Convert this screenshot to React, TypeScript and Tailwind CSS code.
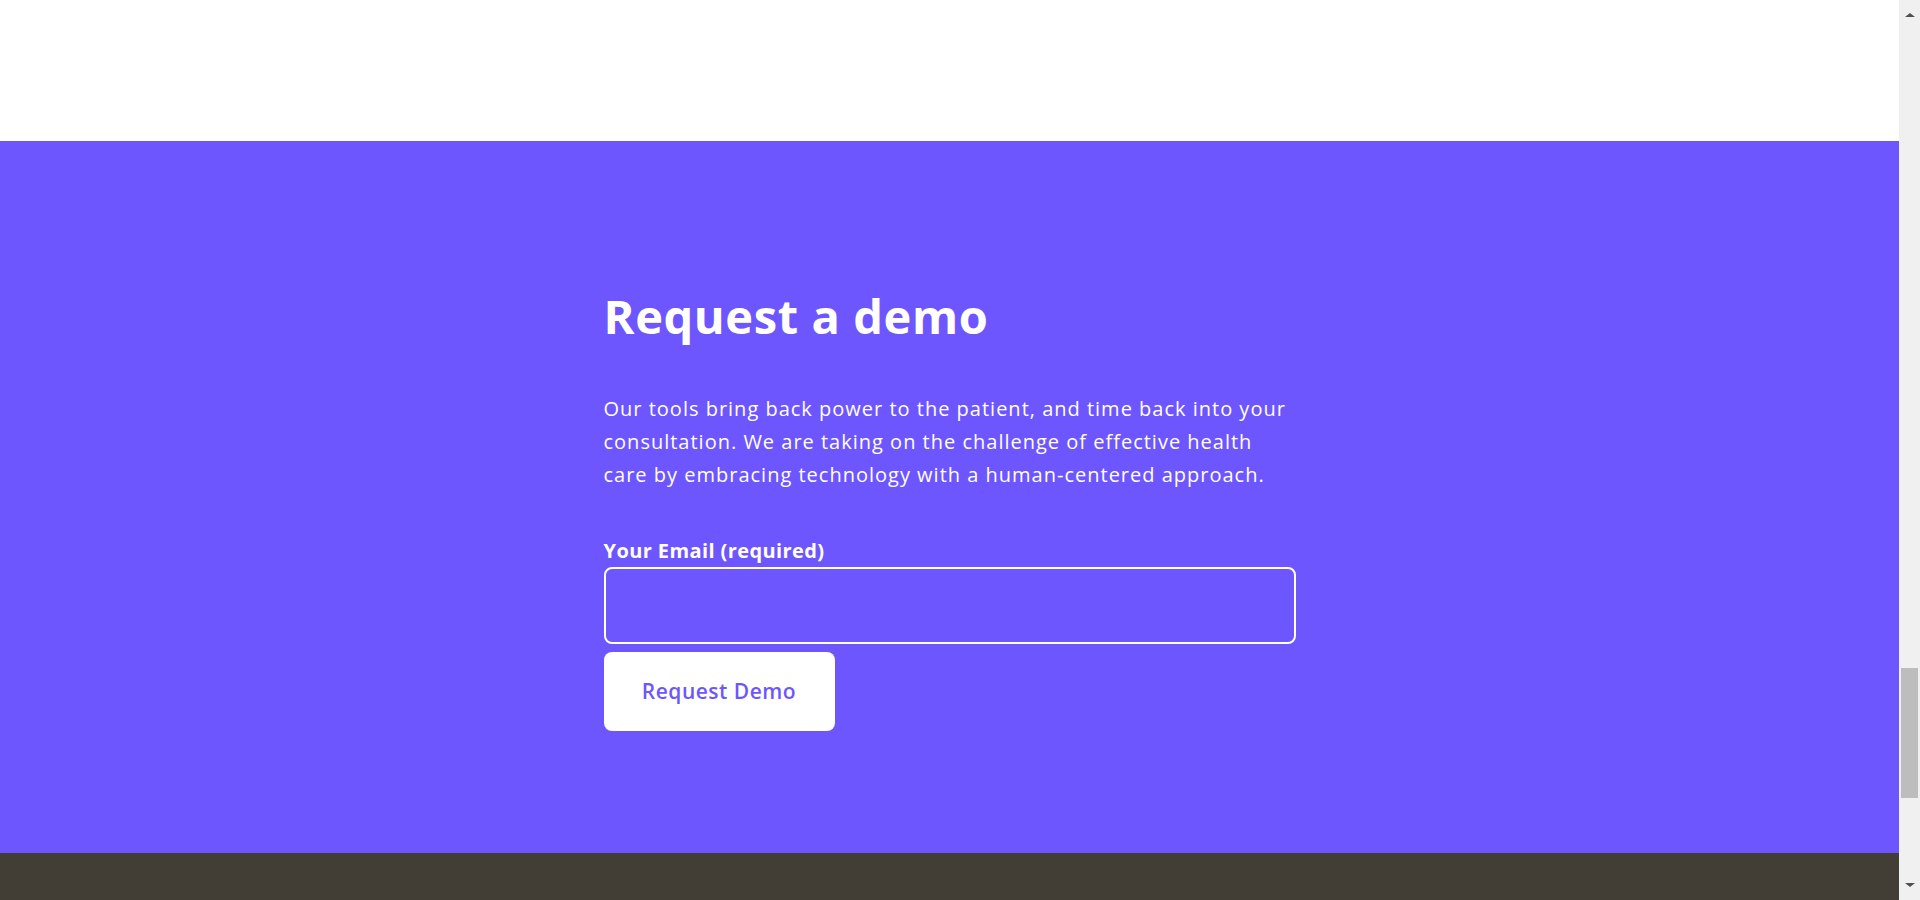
import { useState } from 'react';

export default function App() {
    const [email, setEmail] = useState('');

    return (
        <div className='flex h-[900px] w-full overflow-hidden bg-white' style={{ fontFamily: '"Open Sans", Lato, sans-serif' }}>

            {/* page */}
            <div className='flex flex-1 flex-col'>
                <div className='h-[141px] bg-white' />

                {/* request a demo */}
                <section className='flex h-[712px] justify-center bg-[#6e56ff] pt-[147px]'>
                    <div className='w-[692px] text-white'>
                        <h2 className='text-[47px] font-bold leading-[1.2] tracking-[0.6px]'>Request a demo</h2>

                        <p className='mt-[48px] text-[20px] leading-[33px] tracking-[1px]'>
                            Our tools bring back power to the patient, and time back into your consultation. We are taking on the challenge of effective health care by embracing technology with a human-centered approach.
                        </p>

                        <form className='mt-[46px] flex flex-col' onSubmit={(e) => e.preventDefault()}>
                            <label htmlFor='email' className='text-[20px] font-bold leading-[28px] tracking-[0.4px]'>
                                Your Email (required)
                            </label>
                            <input
                                id='email'
                                type='email'
                                value={email}
                                onChange={(e) => setEmail(e.target.value)}
                                className='mt-[2px] h-[77px] w-full rounded-lg border-2 border-white bg-transparent px-4 text-[20px] text-white outline-none'
                            />
                            <button
                                type='submit'
                                className='mt-2 h-[79px] w-[231px] rounded-lg bg-white text-[21px] font-semibold tracking-[0.5px] text-[#6e56ff]'
                            >
                                Request Demo
                            </button>
                        </form>
                    </div>
                </section>

                <footer className='flex-1 bg-[#423e36]' />
            </div>

            {/* scrollbar */}
            <div className='flex w-[21px] flex-col items-center bg-[#f0f0f0]'>
                <div className='flex h-[17px] items-end justify-center'>
                    <div className='h-0 w-0 border-x-[5px] border-b-[4px] border-x-transparent border-b-[#505050]' />
                </div>
                <div className='flex flex-1 flex-col pt-[651px]'>
                    <div className='h-[130px] w-[17px] bg-[#bdbdbd]' />
                </div>
                <div className='flex h-[17px] items-start justify-center'>
                    <div className='h-0 w-0 border-x-[5px] border-t-[4px] border-x-transparent border-t-[#505050]' />
                </div>
            </div>
        </div>
    );
}
